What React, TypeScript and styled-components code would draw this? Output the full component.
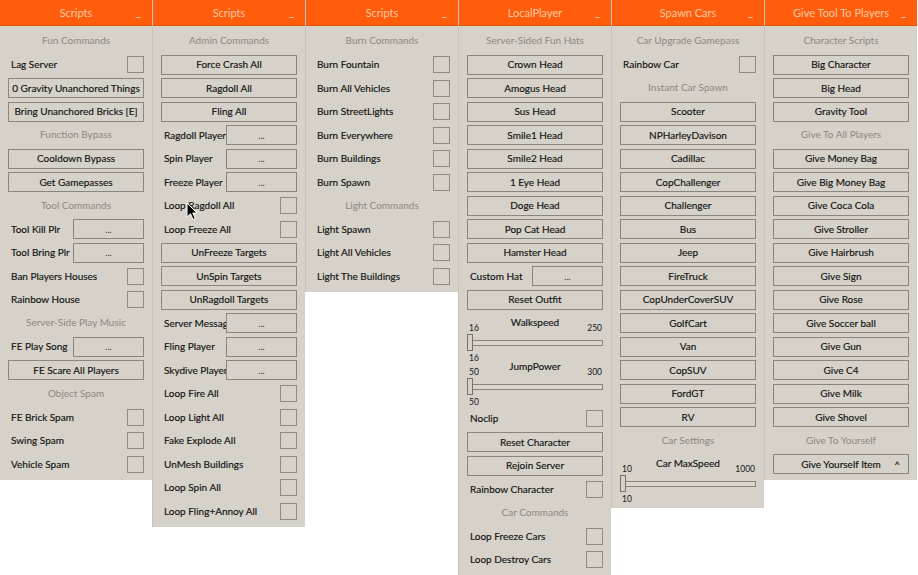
import styled, { createGlobalStyle } from "styled-components"

type Item =
  | { t: "s"; text: string }
  | { t: "b"; text: string }
  | { t: "c"; text: string }
  | { t: "i"; text: string }
  | { t: "d"; text: string }
  | { t: "r"; text: string; min: number; max: number; tall?: boolean }

const sec = (text: string): Item => ({ t: "s", text })
const btn = (text: string): Item => ({ t: "b", text })
const chk = (text: string): Item => ({ t: "c", text })
const inp = (text: string): Item => ({ t: "i", text })

const panels: { title: string; items: Item[] }[] = [
  {
    title: "Scripts",
    items: [
      sec("Fun Commands"),
      chk("Lag Server"),
      btn("0 Gravity Unanchored Things"),
      btn("Bring Unanchored Bricks [E]"),
      sec("Function Bypass"),
      btn("Cooldown Bypass"),
      btn("Get Gamepasses"),
      sec("Tool Commands"),
      inp("Tool Kill Plr"),
      inp("Tool Bring Plr"),
      chk("Ban Players Houses"),
      chk("Rainbow House"),
      sec("Server-Side Play Music"),
      inp("FE Play Song"),
      btn("FE Scare All Players"),
      sec("Object Spam"),
      chk("FE Brick Spam"),
      chk("Swing Spam"),
      chk("Vehicle Spam"),
    ],
  },
  {
    title: "Scripts",
    items: [
      sec("Admin Commands"),
      btn("Force Crash All"),
      btn("Ragdoll All"),
      btn("Fling All"),
      inp("Ragdoll Player"),
      inp("Spin Player"),
      inp("Freeze Player"),
      chk("Loop Ragdoll All"),
      chk("Loop Freeze All"),
      btn("UnFreeze Targets"),
      btn("UnSpin Targets"),
      btn("UnRagdoll Targets"),
      inp("Server Message"),
      inp("Fling Player"),
      inp("Skydive Player"),
      chk("Loop Fire All"),
      chk("Loop Light All"),
      chk("Fake Explode All"),
      chk("UnMesh Buildings"),
      chk("Loop Spin All"),
      chk("Loop Fling+Annoy All"),
    ],
  },
  {
    title: "Scripts",
    items: [
      sec("Burn Commands"),
      chk("Burn Fountain"),
      chk("Burn All Vehicles"),
      chk("Burn StreetLights"),
      chk("Burn Everywhere"),
      chk("Burn Buildings"),
      chk("Burn Spawn"),
      sec("Light Commands"),
      chk("Light Spawn"),
      chk("Light All Vehicles"),
      chk("Light The Buildings"),
    ],
  },
  {
    title: "LocalPlayer",
    items: [
      sec("Server-Sided Fun Hats"),
      btn("Crown Head"),
      btn("Amogus Head"),
      btn("Sus Head"),
      btn("Smile1 Head"),
      btn("Smile2 Head"),
      btn("1 Eye Head"),
      btn("Doge Head"),
      btn("Pop Cat Head"),
      btn("Hamster Head"),
      inp("Custom Hat"),
      btn("Reset Outfit"),
      { t: "r", text: "Walkspeed", min: 16, max: 250 },
      { t: "r", text: "JumpPower", min: 50, max: 300, tall: true },
      chk("Noclip"),
      btn("Reset Character"),
      btn("Rejoin Server"),
      chk("Rainbow Character"),
      sec("Car Commands"),
      chk("Loop Freeze Cars"),
      chk("Loop Destroy Cars"),
    ],
  },
  {
    title: "Spawn Cars",
    items: [
      sec("Car Upgrade Gamepass"),
      chk("Rainbow Car"),
      sec("Instant Car Spawn"),
      btn("Scooter"),
      btn("NPHarleyDavison"),
      btn("Cadillac"),
      btn("CopChallenger"),
      btn("Challenger"),
      btn("Bus"),
      btn("Jeep"),
      btn("FireTruck"),
      btn("CopUnderCoverSUV"),
      btn("GolfCart"),
      btn("Van"),
      btn("CopSUV"),
      btn("FordGT"),
      btn("RV"),
      sec("Car Settings"),
      { t: "r", text: "Car MaxSpeed", min: 10, max: 1000, tall: true },
    ],
  },
  {
    title: "Give Tool To Players",
    items: [
      sec("Character Scripts"),
      btn("Big Character"),
      btn("Big Head"),
      btn("Gravity Tool"),
      sec("Give To All Players"),
      btn("Give Money Bag"),
      btn("Give Big Money Bag"),
      btn("Give Coca Cola"),
      btn("Give Stroller"),
      btn("Give Hairbrush"),
      btn("Give Sign"),
      btn("Give Rose"),
      btn("Give Soccer ball"),
      btn("Give Gun"),
      btn("Give C4"),
      btn("Give Milk"),
      btn("Give Shovel"),
      sec("Give To Yourself"),
      { t: "d", text: "Give Yourself Item" },
    ],
  },
]

function Slider({ text, min, max, tall }: { text: string; min: number; max: number; tall?: boolean }) {
  return (
    <SliderWrap $tall={tall}>
      <SliderTitle>{text}</SliderTitle>
      <SmallNum $side="left">{min}</SmallNum>
      <SmallNum $side="right">{max}</SmallNum>
      <Track />
      <Thumb />
      <ValueNum>{min}</ValueNum>
    </SliderWrap>
  )
}

function renderItem(item: Item, key: number) {
  switch (item.t) {
    case "s":
      return <SectionLabel key={key}>{item.text}</SectionLabel>
    case "b":
      return <Button key={key}>{item.text}</Button>
    case "c":
      return (
        <Row key={key}>
          <RowText>{item.text}</RowText>
          <CheckBox />
        </Row>
      )
    case "i":
      return (
        <Row key={key}>
          <RowText>{item.text}</RowText>
          <InputBox>...</InputBox>
        </Row>
      )
    case "d":
      return (
        <Button key={key}>
          {item.text}
          <Caret>^</Caret>
        </Button>
      )
    case "r":
      return <Slider key={key} text={item.text} min={item.min} max={item.max} tall={item.tall} />
  }
}

export default function App() {
  return (
    <>
      <GlobalStyle />
      <Desktop>
        {panels.map((p, i) => (
          <Panel key={i} $first={i === 0}>
            <Header>
              <span />
              <Title>{p.title}</Title>
              <Minimize>_</Minimize>
            </Header>
            <Body>{p.items.map(renderItem)}</Body>
          </Panel>
        ))}
        <Cursor width="12" height="19" viewBox="0 0 12 19">
          <path d="M1 1 L1 15 L4.5 11.8 L7 17.5 L9.2 16.6 L6.8 11 L11 11 Z" fill="#000" stroke="#fff" strokeWidth="1" strokeLinejoin="round" />
        </Cursor>
      </Desktop>
    </>
  )
}

const GlobalStyle = createGlobalStyle`
  body {
    margin: 0;
    background: #ffffff;
    font-family: Lato, "Noto Sans", sans-serif;
  }
`

const Desktop = styled.div`
  position: relative;
  display: flex;
  align-items: flex-start;
  width: 918px;
  height: 575px;
  overflow: hidden;
`

const Panel = styled.section<{ $first?: boolean }>`
  flex: none;
  width: ${(p) => (p.$first ? 152 : 153)}px;
  background: #d6d1c9;
  border-left: ${(p) => (p.$first ? "none" : "1px solid #c8c3bb")};
  box-sizing: border-box;
  display: flex;
  flex-direction: column;
`

const Header = styled.header`
  height: 26px;
  background: #ff5d0b;
  border-bottom: 1px solid #e85306;
  box-sizing: border-box;
  display: grid;
  grid-template-columns: 16px 1fr 16px;
  align-items: center;
`

const Title = styled.div`
  text-align: center;
  color: #ffcaa6;
  font-size: 11px;
  white-space: nowrap;
`

const Minimize = styled.div`
  color: #ffe6d6;
  font-size: 11px;
  line-height: 11px;
  margin-top: -2px;
`

const Body = styled.div`
  display: flex;
  flex-direction: column;
  gap: 3.5px;
  padding: 5px 8px 6px 8px;
`

const SectionLabel = styled.div`
  height: 20px;
  line-height: 19px;
  text-align: center;
  color: #8d8881;
  font-size: 10px;
  white-space: nowrap;
`

const Button = styled.div`
  position: relative;
  height: 20px;
  box-sizing: border-box;
  border: 1px solid #8a857e;
  background: #d6d1c9;
  display: flex;
  align-items: center;
  justify-content: center;
  padding-bottom: 1px;
  color: #111;
  font-size: 10px;
  white-space: nowrap;
  -webkit-text-stroke: 0.15px #111;
`

const Caret = styled.span`
  position: absolute;
  right: 8px;
  top: 3px;
  font-size: 10px;
`

const Row = styled.div`
  height: 20px;
  display: flex;
  align-items: center;
`

const RowText = styled.div`
  flex: 1 1 0;
  min-width: 0;
  padding: 0 0 1px 3px;
  color: #111;
  font-size: 10px;
  white-space: nowrap;
  -webkit-text-stroke: 0.15px #111;
`

const CheckBox = styled.div`
  flex: none;
  width: 17px;
  height: 17px;
  box-sizing: border-box;
  border: 1px solid #8f8a83;
  background: #d6d1c9;
`

const InputBox = styled.div`
  position: relative;
  flex: none;
  width: 71px;
  height: 20px;
  box-sizing: border-box;
  border: 1px solid #8a857e;
  background: #d6d1c9;
  color: #333;
  font-size: 9px;
  display: flex;
  align-items: center;
  justify-content: center;
`

const SliderWrap = styled.div<{ $tall?: boolean }>`
  position: relative;
  height: ${(p) => (p.$tall ? 48 : 40.5)}px;
`

const SliderTitle = styled.div`
  height: 20px;
  line-height: 19px;
  text-align: center;
  color: #111;
  font-size: 10px;
  -webkit-text-stroke: 0.15px #111;
`

const SmallNum = styled.div<{ $side: "left" | "right" }>`
  position: absolute;
  top: 10px;
  ${(p) => (p.$side === "left" ? "left: 2px;" : "right: 1px;")}
  font-size: 8.5px;
  line-height: 11px;
  color: #161616;
`

const ValueNum = styled.div`
  position: absolute;
  top: 40px;
  left: 2px;
  font-size: 8.5px;
  line-height: 11px;
  color: #161616;
`

const Track = styled.div`
  position: absolute;
  left: 0;
  right: 0;
  top: 27px;
  height: 6px;
  box-sizing: border-box;
  border: 1px solid #8a857e;
  background: #d9d5cd;
`

const Thumb = styled.div`
  position: absolute;
  left: 0;
  top: 21px;
  width: 6px;
  height: 17px;
  box-sizing: border-box;
  border: 1px solid #77726c;
  background: #d6d1c9;
`

const Cursor = styled.svg`
  position: absolute;
  left: 186px;
  top: 202px;
`
